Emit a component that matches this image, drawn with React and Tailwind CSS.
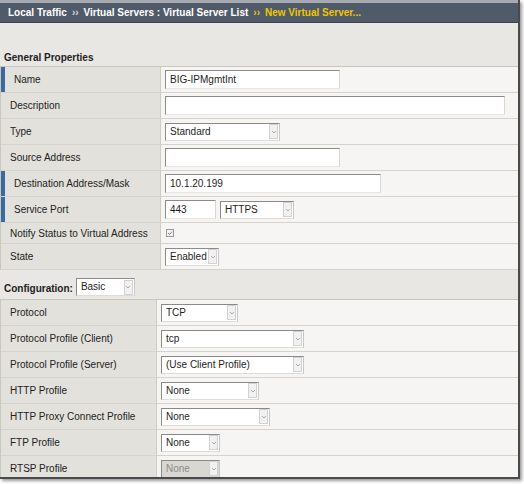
import React from "react";

const font = { fontFamily: '"Liberation Sans", Arial, sans-serif' };

const TextInput = ({ value = "", width }) => (
  <div
    className={`h-[19px] ${width} bg-white border border-t-[#8a8a8a] border-l-[#8a8a8a] border-r-[#d6d6d6] border-b-[#e6e6e6] flex items-center px-[4px] text-[10px] text-[#1e1e1e]`}
  >
    {value}
  </div>
);

const Select = ({ value, width, disabled = false }) => (
  <div
    className={`h-[18px] ${width} ${disabled ? "bg-[#d9d7d2] text-[#8c8c8c]" : "bg-white text-[#1e1e1e]"} border border-t-[#8a8a8a] border-l-[#8a8a8a] border-r-[#c8c8c8] border-b-[#dcdcdc] flex items-center text-[10px]`}
  >
    <span className="flex-1 pl-[4px] leading-none">{value}</span>
    <span className="w-[9px] h-[15px] mr-[1px] border border-[#d2d2d2] bg-[#f1f1f1] flex items-center justify-center">
      <svg width="6" height="4" viewBox="0 0 6 4">
        <path d="M1 1l2 2 2-2" fill="none" stroke="#9a9a9a" strokeWidth="0.8" />
      </svg>
    </span>
  </div>
);

const Row = ({ label, required, labelWidth, height = "h-[26px]", children }) => (
  <div className={`flex ${height} border-b border-[#d6d3ce]`}>
    <div
      className={`${labelWidth} shrink-0 flex items-center bg-[#e3e1dc] border-r border-[#cfccc6] relative ${required ? "pl-[13px]" : "pl-[9px]"}`}
    >
      {required && <span className="absolute left-0 top-0 bottom-0 w-[4px] bg-[#3b6aa0]" />}
      <span className="text-[10px] text-[#222] whitespace-nowrap">{label}</span>
    </div>
    <div className="flex-1 flex items-center gap-[4px] bg-[#f6f5f3] pl-[4px]">{children}</div>
  </div>
);

const App = () => {
  return (
    <div className="w-[524px] h-[484px] bg-white" style={font}>
      <div className="w-[520px] h-[479px] bg-[#e9e7e3] border-r-2 border-b-2 border-[#4a4a4a] shadow-[2px_2px_3px_rgba(0,0,0,0.4)] overflow-hidden">
        <div className="h-[3px] bg-[#a7abb1]" />
        <div className="h-[20px] bg-[#4f5b69] border-b border-[#3a434e] flex items-center pl-[8px] text-[10px] font-bold">
          <span className="text-white">Local Traffic</span>
          <span className="text-[#d8dce2] mx-[5px]">››</span>
          <span className="text-white">Virtual Servers : Virtual Server List</span>
          <span className="text-[#f2c500] mx-[5px]">››</span>
          <span className="text-[#f2c500]">New Virtual Server...</span>
        </div>

        <div className="h-[28px]" />
        <div className="pl-[4px] text-[10px] font-bold text-[#222] h-[14px] leading-[14px]">General Properties</div>

        <div className="border-t border-l border-[#c9c6c0] mt-[1px]">
          <Row label="Name" required labelWidth="w-[160px]">
            <TextInput value="BIG-IPMgmtInt" width="w-[175px]" />
          </Row>
          <Row label="Description" labelWidth="w-[160px]">
            <TextInput width="w-[340px]" />
          </Row>
          <Row label="Type" labelWidth="w-[160px]">
            <Select value="Standard" width="w-[115px]" />
          </Row>
          <Row label="Source Address" labelWidth="w-[160px]">
            <TextInput width="w-[175px]" />
          </Row>
          <Row label="Destination Address/Mask" required labelWidth="w-[160px]">
            <TextInput value="10.1.20.199" width="w-[216px]" />
          </Row>
          <Row label="Service Port" required labelWidth="w-[160px]">
            <TextInput value="443" width="w-[51px]" />
            <Select value="HTTPS" width="w-[74px]" />
          </Row>
          <Row label="Notify Status to Virtual Address" labelWidth="w-[160px]" height="h-[21px]">
            <span className="ml-[1px] w-[8px] h-[8px] border border-[#9a9a9a] bg-[#f3f3f3] flex items-center justify-center">
              <svg width="6" height="6" viewBox="0 0 6 6">
                <path d="M1 3l1.5 1.5L5 1.5" fill="none" stroke="#777" strokeWidth="0.9" />
              </svg>
            </span>
          </Row>
          <Row label="State" labelWidth="w-[160px]">
            <Select value="Enabled" width="w-[54px]" />
          </Row>
        </div>

        <div className="h-[27px] flex items-end pl-[4px] pb-[1px] gap-[3px]">
          <span className="text-[10px] font-bold text-[#222] leading-[14px]">Configuration:</span>
          <Select value="Basic" width="w-[59px]" />
        </div>

        <div className="border-t border-l border-[#c9c6c0] mt-[2px]">
          <Row label="Protocol" labelWidth="w-[156px]">
            <Select value="TCP" width="w-[77px]" />
          </Row>
          <Row label="Protocol Profile (Client)" labelWidth="w-[156px]">
            <Select value="tcp" width="w-[143px]" />
          </Row>
          <Row label="Protocol Profile (Server)" labelWidth="w-[156px]">
            <Select value="(Use Client Profile)" width="w-[143px]" />
          </Row>
          <Row label="HTTP Profile" labelWidth="w-[156px]">
            <Select value="None" width="w-[98px]" />
          </Row>
          <Row label="HTTP Proxy Connect Profile" labelWidth="w-[156px]">
            <Select value="None" width="w-[109px]" />
          </Row>
          <Row label="FTP Profile" labelWidth="w-[156px]">
            <Select value="None" width="w-[59px]" />
          </Row>
          <Row label="RTSP Profile" labelWidth="w-[156px]">
            <Select value="None" width="w-[59px]" disabled />
          </Row>
        </div>
      </div>
    </div>
  );
};

export default App;
